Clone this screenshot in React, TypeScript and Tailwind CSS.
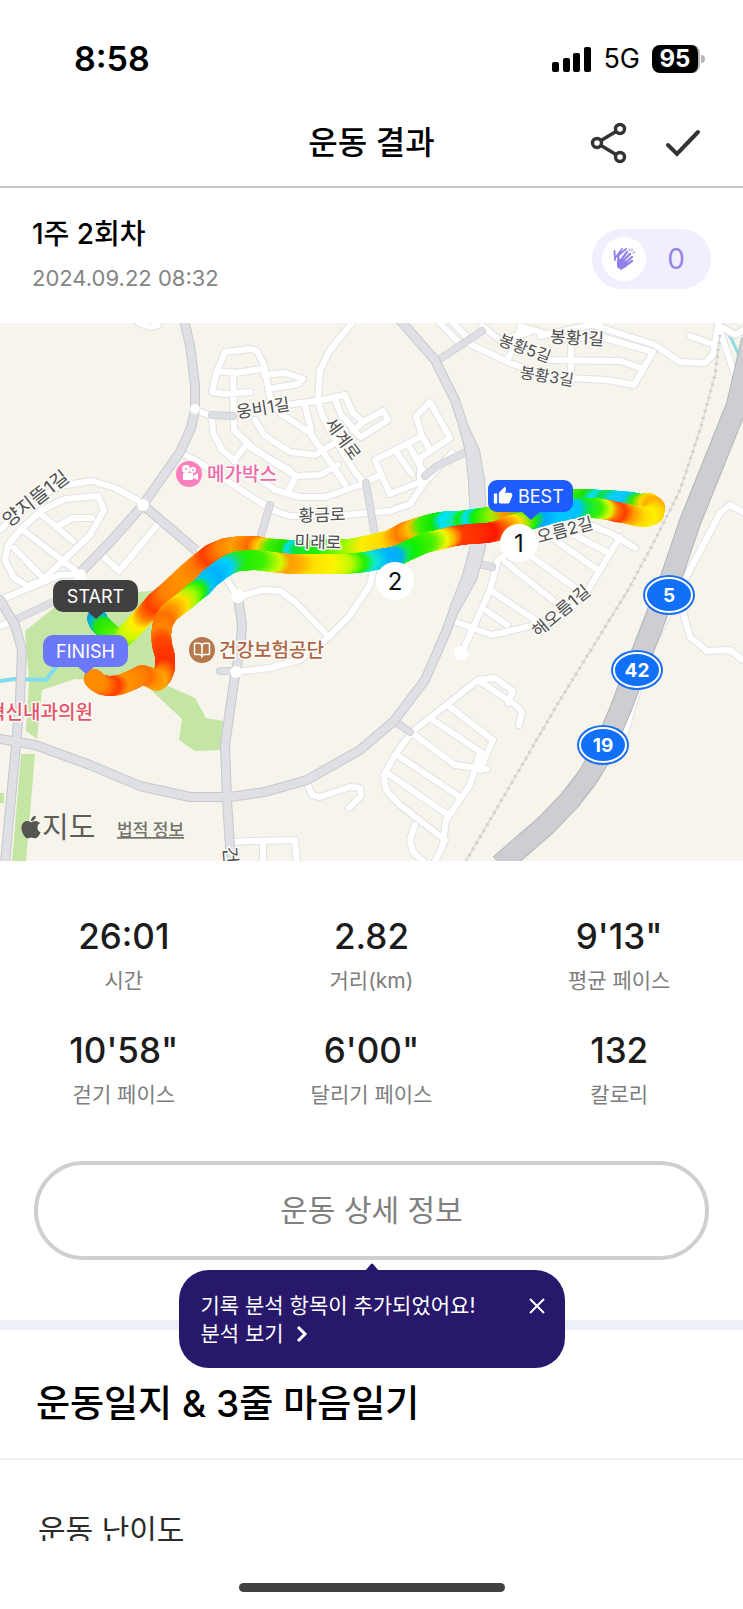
import { FaApple } from "react-icons/fa";
import { MdThumbUp } from "react-icons/md";
import { LuBookOpen } from "react-icons/lu";

const localRoads: string[] = [
  "M0 530 L30 503 L60 486 L92 481 L115 488 L143 503",
  "M8 545 L22 528 L42 510 L65 499 L98 496 L104 510 L90 535 L62 562 L42 580 L28 586 L14 578 L5 560 Z",
  "M42 515 L73 541",
  "M23 530 L80 574",
  "M14 548 L42 577",
  "M58 526 L73 518 L92 518",
  "M103 556 L119 571 L158 524",
  "M139 323 L150 327 L158 325",
  "M250 349 L225 352 L217 371 L212 392 L225 394 L250 392",
  "M217 371 L235 373 L262 369",
  "M233 372 L234 430 L252 447 L265 456 L290 470",
  "M195 410 L212 416",
  "M212 415 L213 433 L222 450 L235 461",
  "M246 445 L234 461",
  "M184 454 L205 466 L250 496 L275 511 L290 516 L345 515 L390 511 L410 504 L425 482 L452 453",
  "M250 349 L257 351 L264 365 L270 397 L280 413 L310 433 L345 484",
  "M264 375 L285 373 L303 379 L298 384 L268 389",
  "M352 323 L330 350 L320 370 L318 400 L322 415 L335 440 L355 472 L364 483",
  "M285 405 L318 401 L345 395 L353 413 L363 422 L355 430",
  "M363 422 L383 411 L388 420 L361 437 L353 430",
  "M335 399 L341 415 L355 430",
  "M305 405 L311 430",
  "M255 420 L264 435 L290 452 L315 455 L338 441",
  "M250 447 L275 463 L296 476 L320 475 L338 465",
  "M296 476 L287 493",
  "M250 472 L275 490 L300 497 L325 497 L360 485 L380 475",
  "M375 460 L395 450 L422 436 L416 416 L430 402 L450 438 L420 458 L420 482 L390 494 L375 460",
  "M395 450 L412 474",
  "M408 444 L424 473",
  "M422 436 L430 450",
  "M380 540 L400 530 L430 517 L480 516",
  "M370 585 L375 562",
  "M440 323 L461 345",
  "M453 323 L470 340",
  "M468 343 L508 362 L548 377 L607 380 L634 385 L653 352 L605 338 L560 338 L520 326",
  "M482 326 L500 340 L530 332",
  "M520 330 L507 362",
  "M593 325 L655 345 L680 362 L705 363 L713 355 L718 325",
  "M690 336 L712 344",
  "M548 360 L620 361 L641 368",
  "M571 345 L571 382",
  "M540 336 L600 323",
  "M718 325 L728 355 L736 378",
  "M718 325 L735 335 L743 330",
  "M565 524 L590 525 L612 534 L635 548",
  "M620 537 L588 590 L565 614 L535 625 L492 635 L453 621",
  "M520 545 L498 560 L490 590 L463 650",
  "M545 533 L595 568",
  "M518 547 L580 591",
  "M505 562 L565 610",
  "M565 530 L605 551",
  "M493 592 L535 620",
  "M487 611 L507 625",
  "M478 680 L440 710 L412 732 L395 755 L384 775 L386 790 L400 805 L445 840",
  "M478 680 L495 678 L513 691 L508 703",
  "M478 680 L515 705 L522 712 L519 725",
  "M450 707 L493 740 L480 770",
  "M433 720 L482 753",
  "M412 733 L455 765 L487 769",
  "M400 757 L460 797",
  "M390 775 L448 815",
  "M480 753 L470 785 L446 820 L443 845 L435 861",
  "M415 825 L410 840 L413 852 L425 863",
  "M308 785 L312 795 L320 797 L350 787 L360 788 L361 796 L349 808",
  "M232 842 L250 841 L295 840 L297 863",
  "M263 842 L263 863",
  "M238 597 L262 590 L280 591 L295 602 L329 637",
  "M370 585 L350 615 L329 637 L300 660 L270 668 L236 672",
  "M0 626 L15 620",
  "M0 600 L60 575 L80 574",
  "M198 552 L222 572 L238 597",
  "M743 512 L730 505 L720 513 L690 570 L655 640",
  "M683 612 L690 637 L707 651 L730 650 L743 660",
  "M637 692 L625 732",
];

const collectorRoads: string[] = [
  "M440 359 L482 331",
  "M425 476 L437 466 L468 451",
  "M366 483 L375 535",
  "M270 505 L261 535",
  "M212 415 L233 416",
  "M475 563 L492 567",
  "M394 721 L410 732",
  "M220 671 L233 671",
  "M15 620 L55 601 L75 588",
];

const arterialRoads: string[] = [
  "M184 320 L190 345 L195 385 L195 410 L191 428 L180 452 L145 502",
  "M143 505 L112 540 L82 571",
  "M143 505 L198 552",
  "M400 320 L435 360 L455 400 L468 440 L475 470 L478 520 L478 545 L468 585 L454 610 L446 632 L425 680 L394 721 L360 750 L307 780 L265 792 L230 797 L190 797 L140 786 L90 765 L35 745 L0 739",
  "M0 600 L15 625 L22 650 L20 700 L16 745 L5 863",
  "M238 597 L242 625 L240 650 L235 675 L225 745 L227 800 L231 863",
];

const boulevard =
  "M459 425 L466 452 L469 482 L471 520 L471 545 L463 575 L450 608 L458 612 L476 580 L485 548 L486 520 L484 480 L479 450 L467 425 Z";
const highway =
  "M752 340 L737 405 L715 460 L690 522 L672 575 L645 645 L621 708 L601 755 L587 778 L570 800 L546 825 L500 865";
const railway =
  "M720 335 L715 375 L700 430 L680 490 L655 540 L628 590 L560 700 L466 861";

type Stop = [number, number, string];

const outbound: Stop[] = [
  [97, 618, "#1593e0"], [99, 623, "#00b4d8"], [105, 629, "#28e600"], [113, 636, "#40f000"],
  [122, 638, "#66f000"], [131, 630, "#c8fa00"], [141, 619, "#fff000"], [149, 610, "#ff7a00"],
  [156, 602, "#ff3c00"], [170, 590, "#ff8000"], [188, 573, "#ff9500"], [201, 562, "#ff7a00"],
  [211, 554, "#ff3c00"], [225, 548, "#ff8000"], [240, 546, "#ffa000"], [256, 546, "#ff6a00"],
  [266, 548, "#ffd000"], [276, 549, "#40f000"], [290, 550, "#20e000"], [295, 550, "#00e0ff"],
  [303, 550, "#10e040"], [325, 549, "#20f000"], [350, 549, "#90fa00"], [370, 545, "#ffee00"],
  [390, 540, "#ffd800"], [405, 532, "#ff7a00"], [417, 528, "#ffc000"], [427, 525, "#40f000"],
  [440, 522, "#10e800"], [450, 521, "#00e0ff"], [461, 521, "#10e8b0"], [466, 520, "#10f000"],
  [474, 519, "#00e0ff"], [482, 518, "#10f000"], [500, 515, "#a0f000"], [513, 511, "#ff9000"],
  [530, 505, "#20e800"], [555, 500, "#00c8f0"], [577, 499, "#40f000"], [590, 499, "#20e000"],
  [600, 500, "#00e0ff"], [608, 500, "#10e040"], [620, 501, "#00d0ff"], [632, 502, "#00c8ff"],
  [640, 504, "#30e800"], [649, 503, "#ffd800"], [655, 507, "#ffaa00"], [654, 514, "#ffd400"],
];

const inbound: Stop[] = [
  [654, 514, "#ffd400"], [646, 517, "#fff000"], [635, 516, "#ffd800"], [624, 513, "#ff9500"],
  [616, 512, "#ff3c00"], [609, 510, "#ff7000"], [602, 509, "#e0f800"], [592, 508, "#40f000"],
  [580, 508, "#10e840"], [570, 509, "#00c0ff"], [550, 514, "#00c8ff"], [536, 518, "#00a8ff"],
  [526, 521, "#20f000"], [512, 525, "#ffe000"], [497, 531, "#ff6000"], [487, 533, "#ff1800"],
  [470, 534, "#ff3000"], [454, 536, "#ff3c00"], [446, 538, "#ffaa00"], [438, 540, "#f0f800"],
  [425, 543, "#50f000"], [407, 551, "#10f000"], [399, 555, "#10e850"], [392, 557, "#00b0f0"],
  [380, 559, "#00b4ff"], [366, 562, "#10e8d0"], [356, 563, "#20f000"], [342, 564, "#c0fa00"],
  [325, 564, "#fff400"], [305, 564, "#ffe000"], [292, 564, "#ffb000"], [281, 563, "#ffa000"],
  [272, 562, "#d0fa00"], [255, 560, "#40f000"], [238, 561, "#20f000"], [230, 564, "#20e060"],
  [222, 569, "#00d0ff"], [210, 578, "#00b0ff"], [202, 587, "#00c8f0"], [195, 592, "#20f000"],
  [187, 599, "#a0fa00"], [178, 606, "#ffe000"], [169, 613, "#ffa000"], [163, 622, "#ff7000"],
  [161, 635, "#ff8500"], [162, 645, "#ff4c00"], [165, 656, "#ff3c00"], [165, 668, "#ff3000"],
  [162, 676, "#ff7000"], [157, 681, "#ffa500"], [149, 677, "#ff9000"], [142, 675, "#ff7000"],
  [132, 680, "#ff8500"], [120, 685, "#ff9500"], [110, 686, "#ff3c00"], [102, 685, "#ff6a00"],
  [97, 682, "#ff8500"], [93, 678, "#ff8c00"],
];

function mix(a: string, b: string, t: number): string {
  const channel = (hex: string, i: number) => parseInt(hex.slice(i, i + 2), 16);
  const parts = [1, 3, 5].map((i) => Math.round(channel(a, i) * (1 - t) + channel(b, i) * t));
  return `rgb(${parts.join(",")})`;
}

function Track({ stops }: { stops: Stop[] }) {
  const dots: { x: number; y: number; fill: string }[] = [];
  for (let i = 0; i < stops.length - 1; i++) {
    const [x1, y1, c1] = stops[i];
    const [x2, y2, c2] = stops[i + 1];
    const steps = Math.max(2, Math.ceil(Math.hypot(x2 - x1, y2 - y1)));
    for (let s = 0; s < steps; s++) {
      const t = s / steps;
      dots.push({ x: x1 + (x2 - x1) * t, y: y1 + (y2 - y1) * t, fill: mix(c1, c2, t) });
    }
  }
  return (
    <g>
      {dots.map((d, i) => (
        <circle key={i} cx={d.x} cy={d.y} r={10} fill={d.fill} />
      ))}
    </g>
  );
}

function Roads({ paths, width, casing, fill }: { paths: string[]; width: number; casing: string; fill: string }) {
  const d = paths.join(" ");
  return (
    <g fill="none" strokeLinejoin="round" strokeLinecap="round">
      <path d={d} stroke={casing} strokeWidth={width + 2} />
      <path d={d} stroke={fill} strokeWidth={width} />
    </g>
  );
}

const roadNames: { text: string; x: number; y: number; angle: number; size: number }[] = [
  { text: "봉황1길", x: 577, y: 338, angle: 3, size: 17 },
  { text: "봉황5길", x: 525, y: 348, angle: 20, size: 16 },
  { text: "봉황3길", x: 547, y: 376, angle: 9, size: 16 },
  { text: "웅비1길", x: 263, y: 408, angle: -9, size: 17 },
  { text: "세계로", x: 343, y: 439, angle: 54, size: 17 },
  { text: "황금로", x: 322, y: 515, angle: -2, size: 17 },
  { text: "미래로", x: 318, y: 542, angle: 2, size: 17 },
  { text: "오름2길", x: 565, y: 530, angle: -15, size: 17 },
  { text: "해오름1길", x: 561, y: 611, angle: -40, size: 17 },
  { text: "양지뜰1길", x: 36, y: 499, angle: -38, size: 19 },
];

const routeShields = [
  { n: "5", x: 669, y: 595 },
  { n: "42", x: 637, y: 670 },
  { n: "19", x: 603, y: 745 },
];

function Pin({ x, y, w, label, fill, tip }: { x: number; y: number; w: number; label: string; fill: string; tip: number }) {
  return (
    <g>
      <path d={`M${tip - 9} ${y + 31} L${tip} ${y + 39} L${tip + 9} ${y + 31} Z`} fill={fill} />
      <rect x={x} y={y} width={w} height={32} rx={10} fill={fill} />
      <text x={x + w / 2} y={y + 23} textAnchor="middle" fontSize={18} fill="#fff">
        {label}
      </text>
    </g>
  );
}

function RouteMap() {
  return (
    <svg
      viewBox="0 323 743 538"
      className="block h-auto w-full font-['Inter','Noto_Sans_CJK_KR',sans-serif]"
      role="img"
      aria-label="운동 경로 지도"
    >
      <rect x="0" y="323" width="743" height="538" fill="#f6f4eb" />
      <g fill="#c5e5a5">
        <path d="M25 631 L60 603 L95 596 L160 590 L182 606 L165 640 L168 686 L195 698 L206 718 L223 721 L221 750 L195 751 L179 740 L182 719 L150 689 L142 683 L75 679 L42 690 L37 739 L26 731 L29 680 Z" />
        <path d="M21 754 H35 L26 861 H12 Z" />
        <path d="M0 793 H4 V803 H0 Z" />
      </g>
      <path d="M0 681 L14 679 L46 680 L57 666" fill="none" stroke="#7fdcef" strokeWidth="4" />
      <path d="M722 323 L732 340 L741 360" fill="none" stroke="#8ddbe8" strokeWidth="3" />
      <Roads paths={localRoads} width={6} casing="#e2e2e4" fill="#ffffff" />
      <Roads paths={collectorRoads} width={6} casing="#cfd1d6" fill="#dddfe5" />
      <path d={boulevard} fill="none" stroke="#c6c8ce" strokeWidth="2" strokeLinejoin="round" />
      <Roads paths={arterialRoads} width={8} casing="#c6c8ce" fill="#dfe0e6" />
      <path d={boulevard} fill="#dfe0e6" />
      <g fill="#fff">
        <circle cx="195" cy="409" r="5" />
        <circle cx="143" cy="505" r="6" />
        <circle cx="203" cy="552" r="6" />
        <circle cx="80" cy="575" r="6" />
        <circle cx="238" cy="596" r="7" />
        <circle cx="236" cy="672" r="6" />
        <circle cx="461" cy="653" r="7" />
      </g>
      <path d={railway} fill="none" stroke="#dddbd6" strokeWidth="1.5" />
      <path d={railway} fill="none" stroke="#d2d0cc" strokeWidth="3.5" strokeDasharray="2 5" />
      <path d={highway} fill="none" stroke="#b3b4b8" strokeWidth="22" strokeLinejoin="round" />
      <path d={highway} fill="none" stroke="#cdced2" strokeWidth="20" strokeLinejoin="round" />

      <Track stops={outbound} />
      <Track stops={inbound} />

      <g fill="#4c4d51" stroke="#fbfaf5" strokeWidth="3" strokeLinejoin="round" paintOrder="stroke" textAnchor="middle">
        {roadNames.map((r) => (
          <text key={r.text} x={r.x} y={r.y + 6} fontSize={r.size} transform={`rotate(${r.angle} ${r.x} ${r.y})`}>
            {r.text}
          </text>
        ))}
        <text x="231" y="862" fontSize="18" transform="rotate(85 231 855)">건</text>
      </g>

      <g fontSize="19" fontWeight="500" stroke="#fbfaf5" strokeWidth="3" strokeLinejoin="round" paintOrder="stroke">
        <text x="207" y="481" fill="#ee6bab">메가박스</text>
        <text x="219" y="657" fill="#ad6544">건강보험공단</text>
        <text x="93" y="719" textAnchor="end" fill="#e5536b">혁신내과의원</text>
      </g>

      <g>
        <circle cx="189" cy="474" r="13" fill="#fb7fbd" />
        <g fill="#fff">
          <circle cx="186" cy="469" r="4" />
          <circle cx="193" cy="470" r="3" />
          <rect x="183" y="473" width="10" height="7" rx="1" />
          <path d="M193 476 L198 473 V480 L193 478 Z" />
        </g>
        <circle cx="186" cy="469" r="1" fill="#fb7fbd" />
        <circle cx="193" cy="470" r="1" fill="#fb7fbd" />
      </g>
      <g>
        <circle cx="202" cy="650" r="13" fill="#b5794b" />
        <LuBookOpen x={193} y={641} size={18} color="#fff" />
      </g>

      {routeShields.map((s) => (
        <g key={s.n}>
          <ellipse cx={s.x} cy={s.y} rx="26" ry="20" fill="#1a6ef0" />
          <ellipse cx={s.x} cy={s.y} rx="23" ry="17" fill="#1070f8" stroke="#fff" strokeWidth="2" />
          <text x={s.x} y={s.y + 7} textAnchor="middle" fontSize="19" fontWeight="700" fill="#fff">
            {s.n}
          </text>
        </g>
      ))}

      <g fontSize="24" fill="#111" textAnchor="middle">
        <circle cx="519" cy="543" r="19" fill="#fff" />
        <text x="519" y="552">1</text>
        <circle cx="395" cy="581" r="19" fill="#fff" />
        <text x="395" y="590">2</text>
      </g>

      <path d="M520 510 L531 520 L542 510 Z" fill="#1f5cff" />
      <rect x="488" y="480" width="85" height="32" rx="9" fill="#1f5cff" />
      <MdThumbUp x={493} y={486} size={20} color="#fff" />
      <text x="518" y="503" fontSize="18" fill="#fff">BEST</text>
      <Pin x={53} y={580} w={85} label="START" fill="#404040" tip={96} />
      <Pin x={43} y={635} w={85} label="FINISH" fill="#6b78f9" tip={86} />

      <FaApple x={18} y={814} size={26} color="#55564f" />
      <text x="42" y="838" fontSize="29" fill="#5d5d58">지도</text>
      <a href="#legal">
        <text x="117" y="836" fontSize="17" fontWeight="500" fill="#73736e" textDecoration="underline">법적 정보</text>
      </a>
    </svg>
  );
}

function StatusBar() {
  return (
    <div className="flex h-[98px] items-center justify-between pt-5 pr-[38px] pl-[74px]">
      <span className="text-[34px] leading-10 font-semibold">8:58</span>
      <div className="flex items-center gap-3">
        <svg width="39" height="26" viewBox="0 0 39 26" aria-hidden="true">
          <rect x="0" y="16" width="7" height="10" rx="2" />
          <rect x="11" y="12" width="7" height="14" rx="2" />
          <rect x="21" y="7" width="7" height="19" rx="2" />
          <rect x="32" y="1" width="7" height="25" rx="2" />
        </svg>
        <span className="text-[27px] leading-8">5G</span>
        <div className="flex items-center gap-px">
          <div className="flex h-7 w-12 items-center justify-center rounded-lg border-r-2 border-[#b5b5b5] bg-black text-2xl font-bold text-white">
            95
          </div>
          <div className="h-2 w-1 rounded-r-full bg-[#b5b5b5]" />
        </div>
      </div>
    </div>
  );
}

function ClapIcon() {
  return (
    <svg width="24" height="24" viewBox="0 0 24 24" aria-hidden="true">
      <g fill="none" stroke="#8f7fe9" strokeLinecap="round" strokeLinejoin="round">
        <path d="M3 13 L2.500 4 M4 10 L10 2 M7 8 L14 2" strokeWidth="1.800" />
        <path d="M7 14 L6 8 M9 13 L15 5 M11 14 L18 7 M13 16 L20 10 M13 19 L20 14" strokeWidth="2.200" />
        <path d="M17 2 L18 4 M20 2 L20 4 M23 5 L21 6" strokeWidth="1" />
      </g>
      <path d="M5 14 L6 10 L8 14 L11 12 L16 16 L14 20 L9 23 L5 20 Z" fill="#8f7fe9" />
    </svg>
  );
}

const stats = [
  { value: "26:01", label: "시간" },
  { value: "2.82", label: "거리(km)" },
  { value: "9'13\"", label: "평균 페이스" },
  { value: "10'58\"", label: "걷기 페이스" },
  { value: "6'00\"", label: "달리기 페이스" },
  { value: "132", label: "칼로리" },
];

export default function App() {
  return (
    <div className="w-full bg-white font-['Inter','Noto_Sans_CJK_KR',sans-serif] text-black">
      <StatusBar />
      <header className="grid h-[90px] grid-cols-3 items-center border-b-2 border-[#c6c6c6] px-9 pt-0.5">
        <h1 className="col-start-2 text-center text-[32px] leading-10 font-medium">운동 결과</h1>
        <div className="flex items-center justify-end gap-[26px]">
          <button type="button" aria-label="공유" className="flex size-12 items-center justify-center">
            <svg width="40" height="42" viewBox="0 0 40 42" fill="none" stroke="#333" strokeWidth="3.4" aria-hidden="true">
              <path d="M12 18.5 L27 9.500 M12 23.500 L27 32.500" />
              <circle cx="8" cy="21" r="4.500" />
              <circle cx="31" cy="7" r="4.500" />
              <circle cx="31" cy="35" r="4.500" />
            </svg>
          </button>
          <button type="button" aria-label="완료" className="flex size-12 items-center justify-center">
            <svg width="36" height="28" viewBox="0 0 36 28" fill="none" stroke="#333" strokeWidth="4" strokeLinecap="round" aria-hidden="true">
              <path d="M3 16 L12 25 L33 3" />
            </svg>
          </button>
        </div>
      </header>

      <section className="flex items-start justify-between px-8 pt-6 pb-[23px]">
        <div>
          <h2 className="text-[28px] leading-[44px] font-medium">1주 2회차</h2>
          <p className="text-[22px] leading-[44px] text-[#858585]">2024.09.22 08:32</p>
        </div>
        <button type="button" aria-label="박수 0" className="mt-[17px] flex h-[60px] w-[119px] items-center rounded-full bg-[#f1effd] pr-[26px] pl-2.5">
          <span className="flex size-11 items-center justify-center rounded-full bg-white">
            <ClapIcon />
          </span>
          <span className="flex-1 text-right text-[28px] text-[#9486e6]">0</span>
        </button>
      </section>

      <RouteMap />

      <dl className="grid grid-cols-3 gap-y-7 pt-[52px] text-center">
        {stats.map((s) => (
          <div key={s.label} className="flex flex-col-reverse gap-1">
            <dt className="text-[21px] leading-9 text-[#7d7d7d]">{s.label}</dt>
            <dd className="text-[35px] leading-[46px] font-medium text-[#1c1c1c]">{s.value}</dd>
          </div>
        ))}
      </dl>

      <div className="relative px-[34px] pt-12 pb-[60px]">
        <button type="button" className="h-[99px] w-full rounded-full border-4 border-[#cfcfcf] text-[30px] text-[#808080]">
          운동 상세 정보
        </button>
        <div
          role="status"
          className="absolute top-full left-1/2 z-10 -mt-[50px] flex h-[98px] w-[386px] -translate-x-1/2 justify-between rounded-[30px] bg-[#28186b] px-[22px] pt-[22px] text-white"
        >
          <svg width="14" height="8" viewBox="0 0 14 8" className="absolute -top-[7px] left-1/2 -translate-x-1/2" aria-hidden="true">
            <path d="M0 8 L6 1 Q7 0 8 1 L14 8 Z" fill="#28186b" />
          </svg>
          <p className="text-[21px] leading-7">
            기록 분석 항목이 추가되었어요!
            <a href="#analysis" className="flex items-center gap-3">
              분석 보기
              <svg width="12" height="18" viewBox="0 0 12 18" fill="none" stroke="#fff" strokeWidth="3" aria-hidden="true">
                <path d="M2 2 L9 9 L2 16" />
              </svg>
            </a>
          </p>
          <button type="button" aria-label="닫기" className="-mr-1.5 flex h-7 w-6 items-center justify-center">
            <svg width="18" height="18" viewBox="0 0 18 18" stroke="#fff" strokeWidth="2" aria-hidden="true">
              <path d="M2 2 L16 16 M16 2 L2 16" />
            </svg>
          </button>
        </div>
      </div>

      <div className="h-2.5 bg-[#edf0f8]" />
      <section>
        <h2 className="border-b-2 border-[#eff0f4] px-9 pt-12 pb-7 text-[37px] leading-[52px] font-medium">
          운동일지 &amp; 3줄 마음일기
        </h2>
        <div className="h-[81px] overflow-hidden px-[38px] pt-12">
          <h3 className="text-[30px] leading-[44px] text-[#2b2b2b]">운동 난이도</h3>
        </div>
      </section>
      <div className="flex justify-center pt-[42px] pb-[17px]">
        <div className="h-[9px] w-[266px] rounded-full bg-[#404040]" />
      </div>
    </div>
  );
}
